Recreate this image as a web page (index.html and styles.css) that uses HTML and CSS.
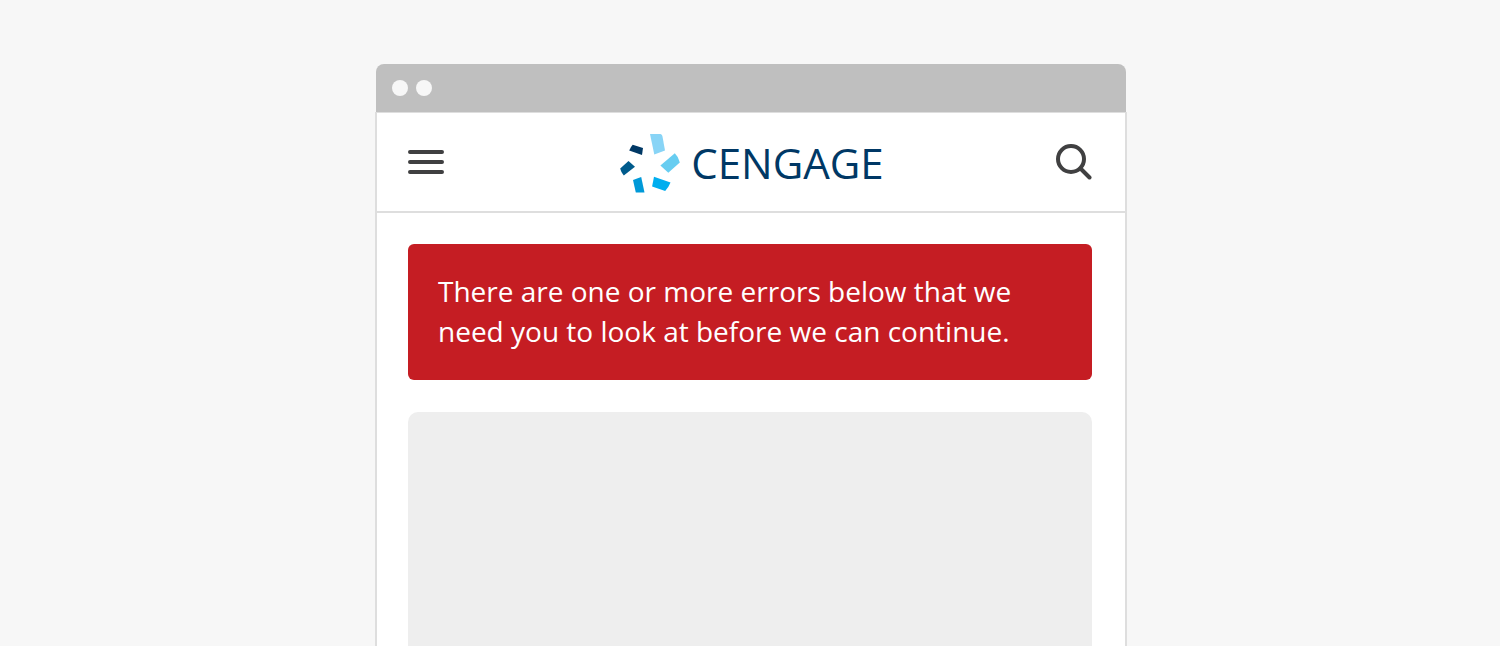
FILE: index.html
```html
<!DOCTYPE html>
<html lang="en">
<head>
<meta charset="utf-8">
<meta name="viewport" content="width=device-width, initial-scale=1">
<title>Cengage</title>
<link rel="stylesheet" href="styles.css">
</head>
<body class="page">
<div class="browser">
  <div class="titlebar">
    <span class="dot"></span>
    <span class="dot"></span>
  </div>
  <div class="viewport">
    <header class="header">
      <button class="icon-button" type="button" aria-label="Menu">
        <svg class="icon" width="36" height="36" viewBox="0 0 36 36" fill="none" stroke="currentColor" stroke-width="4" stroke-linecap="round" aria-hidden="true">
          <path d="M2 8H34M2 18H34M2 28H34"/>
        </svg>
      </button>
      <a class="brand" href="#" aria-label="Cengage">
        <svg class="brand-mark" width="60" height="60" viewBox="0 0 60 60" aria-hidden="true">
          <path fill="#88d4f6" d="M30 0H40.500Q42 .4 42.400 2L45 16.600L34.300 20.400Z"/>
          <path fill="#67cdf1" d="M54.800 19.300Q58.600 22.800 59.800 28.500L48.300 38.800L40.400 31.500Z"/>
          <path fill="#00aeef" d="M34 42.800L50.500 48.500Q48.500 53.500 45.200 56.900L32.100 52.400Z"/>
          <path fill="#0099d8" d="M13 46L21.200 43.100L24.500 58.500H15.800Z"/>
          <path fill="#005b8c" d="M8.500 27L15 32.800L3.800 41.500Q1 38.500 .2 34.500Z"/>
          <path fill="#003865" d="M12.700 10.700L23 14.100L22 20.900L9.200 16.600Q10.500 13 12.700 10.700Z"/>
        </svg>
        <span class="brand-name">CENGAGE</span>
      </a>
      <button class="icon-button" type="button" aria-label="Search">
        <svg class="icon" width="36" height="36" viewBox="0 0 36 36" fill="none" stroke="currentColor" stroke-width="4" stroke-linecap="round" aria-hidden="true">
          <circle cx="15" cy="15" r="13"/>
          <path d="M25 25L33.500 33.500"/>
        </svg>
      </button>
    </header>
    <main class="content">
      <p class="alert" role="alert">There are one or more errors below that we need you to look at before we can continue.</p>
      <div class="placeholder"></div>
    </main>
  </div>
</div>
</body>
</html>
```
FILE: styles.css
```css
* {
  box-sizing: border-box;
}

.page {
  display: flex;
  flex-direction: column;
  align-items: center;
  min-height: 100vh;
  margin: 0;
  padding: 64px 0 0 2px;
  background: #f7f7f7;
  font-family: "Open Sans", sans-serif;
}

.browser {
  display: flex;
  flex: 1;
  flex-direction: column;
  width: 100%;
  max-width: 752px;
}

.titlebar {
  display: flex;
  gap: 8px;
  margin: 0 1px;
  padding: 16px;
  border-radius: 8px 8px 0 0;
  background: #bfbfbf;
}

.dot {
  width: 16px;
  height: 16px;
  border-radius: 50%;
  background: #f7f7f7;
}

.viewport {
  display: flex;
  flex: 1;
  flex-direction: column;
  border: 2px solid #dedede;
  border-width: 1px 2px 0;
  background: #fff;
}

.header {
  display: flex;
  align-items: center;
  justify-content: space-between;
  padding: 17px 33px 17px 31px;
  border-bottom: 2px solid #dedede;
}

.icon-button {
  padding: 0;
  border: 0;
  background: none;
  color: #404041;
  cursor: pointer;
}

.icon {
  display: block;
}

.brand {
  display: flex;
  align-items: flex-start;
  gap: 11px;
  padding: 4px 0 0 4px;
  color: #003865;
  text-decoration: none;
}

.brand-name {
  font-size: 42px;
  line-height: 58px;
}

.content {
  display: flex;
  flex: 1;
  flex-direction: column;
  gap: 32px;
  padding: 31px 33px 0 31px;
}

.alert {
  margin: 0;
  padding: 27px 30px 29px;
  border-radius: 6px;
  background: #c51d23;
  color: #fff;
  font-size: 28px;
  line-height: 40px;
}

.placeholder {
  flex: 1;
  border-radius: 10px 10px 0 0;
  background: #eee;
}
```
